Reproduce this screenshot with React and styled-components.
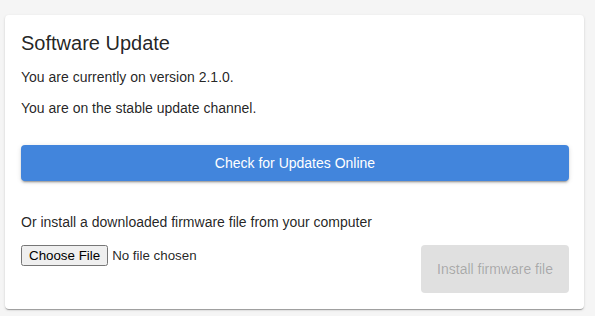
import React from 'react';
import styled, { createGlobalStyle } from 'styled-components';

const GlobalStyle = createGlobalStyle`
  body {
    margin: 0;
    background: #f5f5f5;
    font-family: "Liberation Sans", Arial, sans-serif;
    color: rgba(0, 0, 0, 0.87);
  }
`;

const Page = styled.div`
  padding: 15px 11px 7px 5px;
`;

const Card = styled.div`
  background: #fff;
  border-radius: 4px;
  box-shadow: 0 2px 1px -1px rgba(0,0,0,0.2), 0 1px 1px 0 rgba(0,0,0,0.14), 0 1px 3px 0 rgba(0,0,0,0.12);
  padding: 16px 15px 16px 16px;
`;

const Title = styled.h2`
  margin: 0 0 14px;
  font-size: 20px;
  font-weight: 400;
  line-height: 24px;
`;

const Text = styled.p`
  margin: 0 0 ${p => p.$gap ?? 15}px;
  font-size: 14px;
  line-height: 16px;
`;

const Button = styled.button`
  display: block;
  border: none;
  border-radius: 4px;
  font-family: inherit;
  font-size: 14px;
  cursor: pointer;
  width: ${p => (p.$full ? '100%' : 'auto')};
  height: ${p => p.$height}px;
  padding: 0 16px;
  background: ${p => (p.disabled ? '#e0e0e0' : '#4285dc')};
  color: ${p => (p.disabled ? 'rgba(0,0,0,0.26)' : '#fff')};
  box-shadow: ${p => (p.disabled ? 'none' : '0 3px 1px -2px rgba(0,0,0,0.2), 0 2px 2px 0 rgba(0,0,0,0.14), 0 1px 5px 0 rgba(0,0,0,0.12)')};
`;

const Section = styled.div`
  margin-top: 33px;
`;

const FileRow = styled.div`
  display: flex;
  justify-content: space-between;
  align-items: flex-start;
`;

const FileInput = styled.input`
  font-family: "Liberation Sans", Arial, sans-serif;
  font-size: 13.333px;
  margin-top: 0;
`;

export default function App() {
  return (
    <>
      <GlobalStyle />
      <Page>
        <Card>
          <Title>Software Update</Title>
          <Text>You are currently on version 2.1.0.</Text>
          <Text $gap={29}>You are on the stable update channel.</Text>
          <Button $full $height={36}>Check for Updates Online</Button>
          <Section>
            <Text $gap={15}>Or install a downloaded firmware file from your computer</Text>
            <FileRow>
              <FileInput type="file" />
              <Button disabled $height={48}>Install firmware file</Button>
            </FileRow>
          </Section>
        </Card>
      </Page>
    </>
  );
}
